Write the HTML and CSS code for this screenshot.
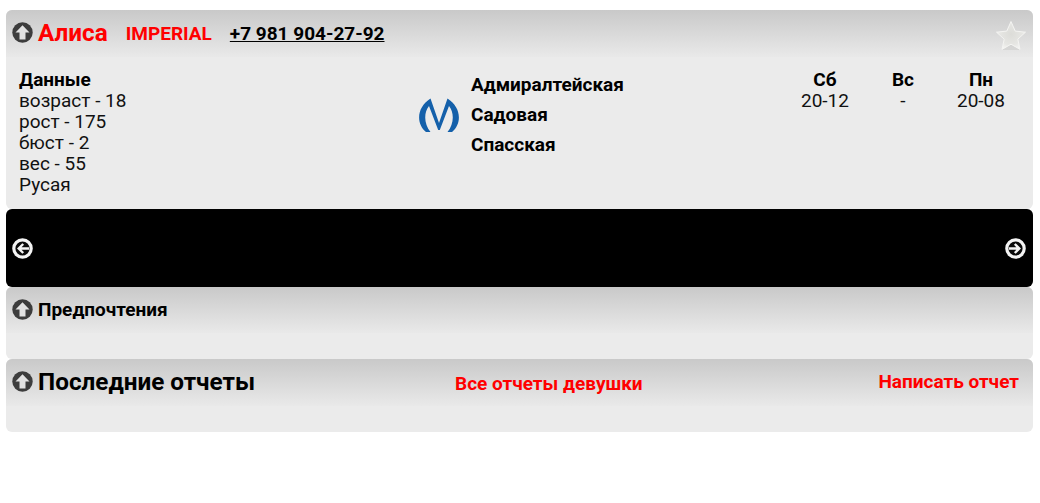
FILE: index.html
```html
<!DOCTYPE html>
<html lang="en">
<head>
    <meta charset="UTF-8">
    <meta name="viewport" content="width=device-width, initial-scale=1.0">
    <title>Алиса</title>
    <link rel="stylesheet" href="styles.css">
</head>
<body>
    <svg class="sprites" width="0" height="0">
        <defs>
            <symbol id="up" viewBox="0 0 21 21">
                <circle cx="10.500" cy="10.500" r="10.200" fill="#3d3d3d"/>
                <path d="M10.500 3.200 17.500 10.500H13.500v7h-6v-7H3.500z" fill="#e2e2e2"/>
            </symbol>
            <symbol id="round-arrow" viewBox="0 0 21 21">
                <circle cx="10.500" cy="10.500" r="8.700" fill="#0a0a0a" stroke="#f4f4f4" stroke-width="3.200"/>
                <path d="M17 10.500H7M11.200 6 6.700 10.500l4.500 4.500" fill="none" stroke="#f4f4f4" stroke-width="2.400"/>
            </symbol>
            <radialGradient id="star-fill" cx="50%" cy="45%" r="55%">
                <stop offset="0" stop-color="#dcdcd8"/>
                <stop offset="0.7" stop-color="#e6e6e3"/>
                <stop offset="1" stop-color="#f3f3f1"/>
            </radialGradient>
        </defs>
    </svg>

    <section class="panel">
        <div class="panel-head head-main">
            <svg class="icon-up"><use href="#up"/></svg>
            <span class="name">Алиса</span>
            <span class="salon">IMPERIAL</span>
            <a class="phone" href="#">+7 981 904-27-92</a>
            <svg class="star" viewBox="0 0 32 32">
                <path d="M16 31l-9 0 2.200-10.500-7.700-7 10.300-1.100L16 2.500l4.200 9.900 10.300 1.100-7.700 7L25 31z" fill="#bdbdb9" opacity="0.35"/>
                <path d="M16 2.500l4.200 9.600 10.300 1.100-7.700 7 2.200 10.200-9-5.200-9 5.200 2.200-10.200-7.700-7 10.300-1.100z" fill="url(#star-fill)" stroke="#f4f4f2" stroke-width="1" stroke-linejoin="round"/>
            </svg>
        </div>
        <div class="panel-body profile">
            <div class="data">
                <b>Данные</b><br>
                возраст - 18<br>
                рост - 175<br>
                бюст - 2<br>
                вес - 55<br>
                Русая
            </div>
            <div class="metro">
                <svg class="metro-logo" viewBox="0 0 40 34">
                    <path d="M7 34C-3.500 25-2 9 11.500.5L20 25 28.500.5C42 9 43.500 25 33 34H28.500C35 26 35.500 15 30 8L20.800 32H19.200L10 8C4.500 15 5 26 11.500 34z" fill="#1460aa"/>
                </svg>
                <ul class="stations">
                    <li>Адмиралтейская</li>
                    <li>Садовая</li>
                    <li>Спасская</li>
                </ul>
            </div>
            <div class="schedule">
                <div class="day"><b>Сб</b><br>20-12</div>
                <div class="day"><b>Вс</b><br>-</div>
                <div class="day"><b>Пн</b><br>20-08</div>
            </div>
        </div>
    </section>

    <div class="gallery">
        <svg class="arrow"><use href="#round-arrow"/></svg>
        <svg class="arrow flip"><use href="#round-arrow"/></svg>
    </div>

    <section class="panel">
        <div class="panel-head head-small">
            <svg class="icon-up"><use href="#up"/></svg>
            <span class="title-small">Предпочтения</span>
        </div>
        <div class="panel-empty"></div>
    </section>

    <section class="panel">
        <div class="panel-head head-reports">
            <svg class="icon-up"><use href="#up"/></svg>
            <span class="title-big">Последние отчеты</span>
            <a class="red-link all-reports" href="#">Все отчеты девушки</a>
            <a class="red-link write-report" href="#">Написать отчет</a>
        </div>
        <div class="panel-empty"></div>
    </section>
</body>
</html>
```

FILE: styles.css
```css
body {
    margin: 10px 7px 0 6px;
    font-family: Roboto, Arial, sans-serif;
    font-size: 19px;
    line-height: 21px;
    color: #111;
    background: #fff;
}
a {
    color: inherit;
}
b {
    font-weight: 700;
    color: #000;
}
.sprites {
    position: absolute;
}
.panel {
    background: #ebebeb;
    border-radius: 6px;
    overflow: hidden;
}
.panel-head {
    display: flex;
    align-items: center;
    padding-left: 6px;
    background: linear-gradient(#c9c9c9, #e9e9e9);
}
.icon-up {
    width: 21px;
    height: 21px;
    flex: none;
    margin-right: 5px;
    margin-top: -3px;
}
.head-main {
    height: 47px;
    padding-right: 6px;
}
.name {
    font-size: 24.3px;
    font-weight: 700;
    color: #f00;
    margin: -2px 18px 0 0;
}
.salon {
    font-weight: 700;
    color: #f00;
    margin-right: 18px;
}
.phone {
    font-weight: 700;
    color: #000;
}
.star {
    width: 32px;
    height: 32px;
    margin-left: auto;
    margin-top: 2px;
}
.profile {
    display: flex;
    height: 152px;
}
.data {
    width: 400px;
    padding: 12px 0 0 13px;
}
.metro {
    width: 367px;
    display: flex;
    align-items: flex-start;
    padding-top: 12px;
}
.metro-logo {
    width: 40px;
    height: 34px;
    margin: 29px 12px 0 0;
    flex: none;
}
.stations {
    list-style: none;
    margin: 1px 0 0;
    padding: 0;
    font-weight: 700;
    color: #000;
    line-height: 30px;
}
.schedule {
    display: flex;
}
.day {
    width: 78px;
    padding-top: 12px;
    text-align: center;
}
.gallery {
    height: 78px;
    background: #000;
    border-radius: 6px;
    display: flex;
    align-items: center;
    justify-content: space-between;
    padding: 0 7px 0 6px;
}
.arrow {
    width: 21px;
    height: 21px;
}
.flip {
    transform: scaleX(-1);
}
.head-small {
    height: 45px;
    padding-top: 1px;
}
.title-small {
    font-weight: 700;
    color: #000;
    margin-top: -2px;
}
.panel-empty {
    height: 26px;
}
.head-reports {
    height: 47px;
    padding-right: 14px;
}
.title-big {
    font-size: 24.3px;
    font-weight: 700;
    color: #000;
    width: 417px;
    margin-top: -2px;
}
.red-link {
    font-weight: 700;
    color: #f00;
    text-decoration: none;
}
.all-reports {
    margin: 2px auto 0 0;
}
.write-report {
    margin-top: -2px;
}
```
